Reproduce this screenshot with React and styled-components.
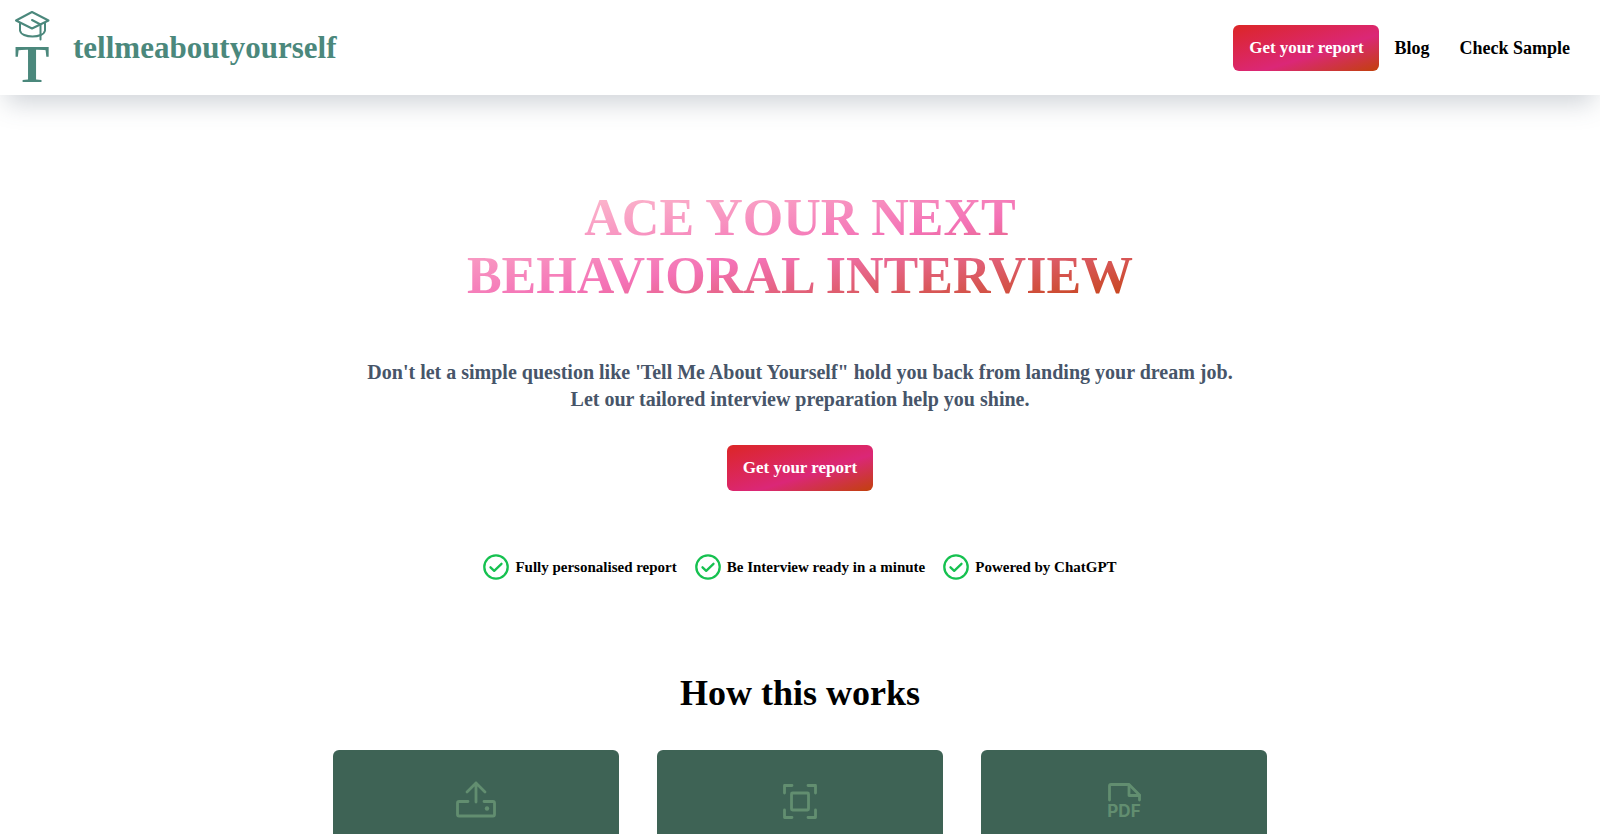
import React from "react";
import styled, { createGlobalStyle } from "styled-components";

const GlobalStyle = createGlobalStyle`
  *, *::before, *::after { box-sizing: border-box; }
  body {
    margin: 0;
    background: #fff;
    color: #000;
    font-family: "Liberation Serif", "Times New Roman", serif;
    font-weight: 700;
  }
  h1, h2, p, ul { margin: 0; padding: 0; }
`;

const Header = styled.header`
  display: flex;
  align-items: center;
  justify-content: space-between;
  height: 95px;
  padding: 0 30px 0 14px;
  background: #fff;
  box-shadow: 0 14px 24px -6px rgba(71, 85, 105, 0.26);
`;

const Brand = styled.a`
  display: flex;
  align-items: center;
  gap: 22px;
  color: #4b887c;
  font-size: 31px;
  line-height: 40px;
  text-decoration: none;
`;

const Nav = styled.nav`
  display: flex;
  align-items: center;
  gap: 15px;
`;

const NavLinks = styled.div`
  display: flex;
  gap: 30px;
`;

const NavLink = styled.a`
  color: #000;
  font-size: 18px;
  line-height: 24px;
  text-decoration: none;
`;

const ReportButton = styled.button`
  min-width: 146px;
  height: 46px;
  padding: 0 12px;
  border: 0;
  border-radius: 6px;
  background: linear-gradient(to bottom right, #dc2626, #db2777 60%, #c2410c);
  color: #fff;
  font: inherit;
  font-size: 17px;
  line-height: 24px;
  white-space: nowrap;
  cursor: pointer;
`;

const Hero = styled.section`
  display: flex;
  flex-direction: column;
  align-items: center;
  padding: 94px 24px 0;
  text-align: center;
`;

const Title = styled.h1`
  background: linear-gradient(to bottom right, #fecdd3, #f472b6 52%, #c2410c);
  background-clip: text;
  -webkit-background-clip: text;
  color: transparent;
  font-size: 52px;
  line-height: 58px;
  text-transform: uppercase;
`;

const Line = styled.span`
  display: block;
`;

const Subtitle = styled.p`
  margin-top: 54px;
  color: #475569;
  font-size: 20px;
  line-height: 27px;
`;

const HeroAction = styled.div`
  margin-top: 32px;
`;

const Features = styled.ul`
  display: flex;
  flex-wrap: wrap;
  justify-content: center;
  gap: 18px;
  margin-top: 62px;
  list-style: none;
`;

const Feature = styled.li`
  display: flex;
  align-items: center;
  gap: 6px;
  font-size: 15px;
  line-height: 28px;
`;

const Steps = styled.section`
  padding: 88px 24px 48px;
`;

const StepsTitle = styled.h2`
  font-size: 36px;
  line-height: 48px;
  text-align: center;
`;

const CardGrid = styled.div`
  display: grid;
  grid-template-columns: repeat(3, minmax(0, 1fr));
  gap: 38px;
  max-width: 934px;
  margin: 33px auto 0;
`;

const Card = styled.article`
  display: flex;
  justify-content: center;
  min-height: 240px;
  padding: 26px 24px;
  border-radius: 6px;
  background: #3e6355;
  color: #628e70;
`;

const LogoSvg = styled.svg`
  overflow: visible;
`;

const LogoMark = () => (
  <LogoSvg width="37" height="75" viewBox="0 0 37 75" fill="none" stroke="currentColor" strokeWidth="2" strokeLinejoin="round" strokeLinecap="round" aria-hidden="true">
    <path d="M2 10.500 18 2 34.500 10.500 18 18.500Z" />
    <path d="M6 13.500v7c1 8 24 8 25 0v-7" />
    <path d="M18 10 26.500 14.500v15" />
    <text x="18" y="72" textAnchor="middle" fontSize="52" fill="currentColor" stroke="none">T</text>
  </LogoSvg>
);

const CheckIcon = () => (
  <svg width="26" height="26" viewBox="0 0 26 26" fill="none" stroke="#16c150" strokeWidth="2.300" aria-hidden="true">
    <circle cx="13" cy="13" r="11.700" />
    <path d="m7.500 13.300 3.700 3.500 7.300-7" strokeLinecap="round" strokeLinejoin="round" />
  </svg>
);

const StepIcon = ({ children }) => (
  <svg width="48" height="48" viewBox="0 0 48 48" fill="none" stroke="currentColor" strokeWidth="2.800" strokeLinecap="round" strokeLinejoin="round" aria-hidden="true">
    {children}
  </svg>
);

const UploadIcon = () => (
  <StepIcon>
    <path d="M16 25.500H7Q5.500 25.500 5.500 27v11.500Q5.500 40 7 40h34q1.500 0 1.500-1.500V27q0-1.500-1.500-1.500h-9" />
    <path d="M24 26V7M15 16l9-9 9 9" />
    <circle cx="35" cy="32.500" r="2.200" fill="currentColor" stroke="none" />
  </StepIcon>
);

const ScanIcon = () => (
  <StepIcon>
    <path d="M8.500 17V9.500H16M32 9.500h7.500V17M39.500 34v7.500H32M16 41.500H8.500V34" />
    <rect x="15.500" y="17" width="17" height="17" rx="1" />
  </StepIcon>
);

const PdfIcon = () => (
  <StepIcon>
    <path d="M9.500 24V10Q9.500 8.500 11 8.500h18L39.500 19v5" />
    <path d="M29 9v10.500h10.500" />
    <text x="24" y="41" textAnchor="middle" fontFamily="Inter, sans-serif" fontWeight="700" fontSize="17" fill="currentColor" stroke="none">PDF</text>
  </StepIcon>
);

const features = ["Fully personalised report", "Be Interview ready in a minute", "Powered by ChatGPT"];
const stepIcons = [UploadIcon, ScanIcon, PdfIcon];

export default function App() {
  return (
    <>
      <GlobalStyle />
      <Header>
        <Brand href="#">
          <LogoMark />
          tellmeaboutyourself
        </Brand>
        <Nav>
          <ReportButton type="button">Get your report</ReportButton>
          <NavLinks>
            <NavLink href="#blog">Blog</NavLink>
            <NavLink href="#sample">Check Sample</NavLink>
          </NavLinks>
        </Nav>
      </Header>
      <main>
        <Hero>
          <Title>
            <Line>Ace your next</Line>
            <Line>behavioral interview</Line>
          </Title>
          <Subtitle>
            <Line>Don't let a simple question like 'Tell Me About Yourself" hold you back from landing your dream job.</Line>
            <Line>Let our tailored interview preparation help you shine.</Line>
          </Subtitle>
          <HeroAction>
            <ReportButton type="button">Get your report</ReportButton>
          </HeroAction>
          <Features>
            {features.map((label) => (
              <Feature key={label}>
                <CheckIcon />
                {label}
              </Feature>
            ))}
          </Features>
        </Hero>
        <Steps>
          <StepsTitle>How this works</StepsTitle>
          <CardGrid>
            {stepIcons.map((Icon, i) => (
              <Card key={i}>
                <Icon />
              </Card>
            ))}
          </CardGrid>
        </Steps>
      </main>
    </>
  );
}
